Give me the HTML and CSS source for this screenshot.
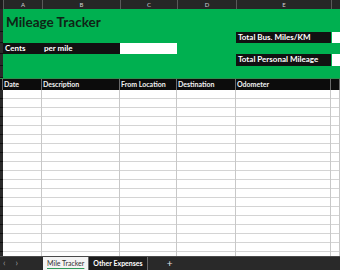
FILE: index.html
```html
<!DOCTYPE html>
<html lang="en">
<head>
  <meta charset="UTF-8">
  <meta name="viewport" content="width=device-width, initial-scale=1.0">
  <title>Mileage Tracker</title>
  <link rel="stylesheet" href="styles.css">
</head>
<body>
  <div class="sheet">
    <div class="cols col-heads">
      <div class="corner"></div>
      <div class="col-head">A</div>
      <div class="col-head">B</div>
      <div class="col-head">C</div>
      <div class="col-head">D</div>
      <div class="col-head">E</div>
      <div class="col-head"></div>
    </div>

    <div class="cols banner">
      <div class="row-head" style="grid-row: 1"></div>
      <div class="row-head" style="grid-row: 2"></div>
      <div class="row-head" style="grid-row: 3"></div>
      <div class="row-head" style="grid-row: 4"></div>
      <div class="row-head" style="grid-row: 5"></div>

      <h1 class="title">Mileage Tracker</h1>

      <div class="label bus">Total Bus. Miles/KM</div>
      <div class="field bus-field"></div>

      <div class="label cents">Cents</div>
      <div class="label per-mile">per mile</div>
      <div class="field cents-field"></div>

      <div class="label personal">Total Personal Mileage</div>
      <div class="field personal-field"></div>
    </div>

    <div class="cols table-head">
      <div class="th"></div>
      <div class="th">Date</div>
      <div class="th">Description</div>
      <div class="th">From Location</div>
      <div class="th">Destination</div>
      <div class="th">Odometer</div>
      <div class="th"></div>
    </div>

    <div class="cols table-body">
      <div class="td row-heads"></div>
      <div class="td"></div>
      <div class="td"></div>
      <div class="td"></div>
      <div class="td"></div>
      <div class="td"></div>
      <div class="td"></div>
    </div>
  </div>

  <div class="tabs">
    <div class="nav">
      <span>&lsaquo;</span>
      <span>&rsaquo;</span>
    </div>
    <div class="tab active">Mile Tracker</div>
    <div class="tab">Other Expenses</div>
    <div class="add">+</div>
  </div>
</body>
</html>
```

FILE: styles.css
```css
body {
  margin: 0;
  width: 340px;
  height: 270px;
  overflow: hidden;
  font-family: Lato, "Open Sans", sans-serif;
  background-color: #ffffff;
  display: flex;
  flex-direction: column;
}

.sheet {
  flex: 1;
  display: flex;
  flex-direction: column;
  overflow: hidden;
}

.cols {
  display: grid;
  grid-template-columns: 3px 39px 78px 57px 59px 95px 9px;
}

/* column letters */
.col-heads {
  height: 9px;
  background-color: #262626;
}

.corner {
  background-color: #1e1e1e;
}

.col-head {
  font-size: 6px;
  line-height: 9px;
  color: #d0d0d0;
  text-align: center;
  border-left: 1px solid #5a5a5a;
}

/* green banner */
.banner {
  grid-template-rows: 23px 11px 11px 12px 12px;
  background-color: #00b050;
}

.row-head {
  grid-column: 1;
  background-color: #2a2a2a;
  border-bottom: 1px solid #0f0f0f;
}

.title {
  grid-column: 2 / 6;
  grid-row: 1;
  margin: 0;
  padding: 5px 0 0 3px;
  font-size: 13.5px;
  font-weight: bold;
  color: #0f2416;
  line-height: 17px;
}

.label {
  background-color: #111111;
  color: #ffffff;
  font-size: 8px;
  font-weight: bold;
  line-height: 11px;
  padding-left: 2px;
  white-space: nowrap;
}

.field {
  background-color: #ffffff;
}

.bus { grid-column: 6; grid-row: 2; }
.bus-field { grid-column: 7; grid-row: 2; margin-left: 1px; }

.cents { grid-column: 2; grid-row: 3; }
.per-mile { grid-column: 3; grid-row: 3; }
.cents-field { grid-column: 4; grid-row: 3; }

.personal { grid-column: 6; grid-row: 4; }
.personal-field { grid-column: 7; grid-row: 4; margin-left: 1px; }

/* table */
.table-head {
  height: 11px;
  background-color: #0c0c0c;
  border-top: 1px solid #2f8f4e;
}

.th {
  color: #f2f2f2;
  font-size: 7px;
  font-weight: bold;
  line-height: 11px;
  padding-left: 1px;
  border-right: 1px solid #6a6a6a;
  white-space: nowrap;
  overflow: hidden;
}

.table-body {
  flex: 1;
  background-image: repeating-linear-gradient(
    to bottom,
    transparent 0,
    transparent 8px,
    #d4d4d4 8px,
    #d4d4d4 9px
  );
}

.td {
  border-right: 1px solid #c8c8c8;
}

.row-heads {
  background-color: #2a2a2a;
  background-image: repeating-linear-gradient(
    to bottom,
    transparent 0,
    transparent 8px,
    #0f0f0f 8px,
    #0f0f0f 9px
  );
  border-right: none;
}

/* sheet tabs */
.tabs {
  height: 13px;
  display: flex;
  align-items: stretch;
  background-color: #292929;
  border-top: 1px solid #4a4a4a;
  font-size: 7px;
}

.nav {
  width: 43px;
  display: flex;
  gap: 10px;
  padding-left: 3px;
  box-sizing: border-box;
  color: #9a9a9a;
  font-size: 9px;
  line-height: 12px;
}

.tab {
  padding: 0 4px;
  line-height: 12px;
  color: #ffffff;
  font-weight: bold;
  border-right: 1px solid #6a6a6a;
  background-color: #1b1b1b;
}

.tab.active {
  background-color: #f4f4f4;
  color: #333333;
  font-weight: normal;
  text-decoration: underline;
  text-decoration-color: #2e9a5a;
  text-underline-offset: 2px;
}

.add {
  width: 44px;
  text-align: center;
  color: #e0e0e0;
  font-size: 10px;
  line-height: 12px;
}
```
